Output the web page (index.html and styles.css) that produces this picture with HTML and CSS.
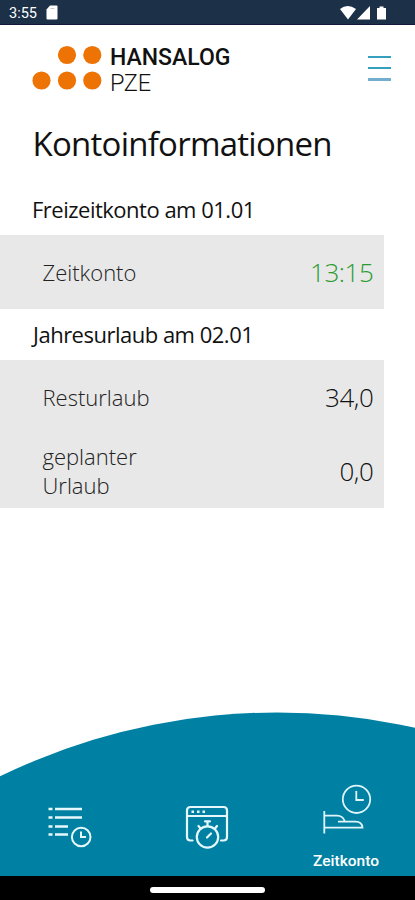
FILE: index.html
```html
<!DOCTYPE html>
<html lang="de">
<head>
<meta charset="utf-8">
<title>Kontoinformationen</title>
<link rel="stylesheet" href="styles.css">
</head>
<body>
<div class="statusbar">
  <span class="time">3:55</span>
  <svg class="sd" width="12" height="15" viewBox="0 0 12 15"><path d="M4 .5h6.500q1 0 1 1v12q0 1-1 1h-9q-1 0-1-1V4.500z" fill="#fff"/><path d="M4.500 3.500h4" stroke="#c3cad1"/></svg>
  <svg class="signals" width="50" height="16" viewBox="0 0 50 16" fill="#fff"><path d="M1 4Q8.500-2 17 4L9 14.500z"/><path d="M31 1v13.500H18z"/><path d="M40.500 1.500h4v1.500h2.500v11.500h-9V3h2.500z"/></svg>
</div>
<header class="header">
  <svg class="dots" width="70" height="46" viewBox="0 0 70 46" fill="#ee7305"><circle cx="35" cy="10" r="9.100"/><circle cx="60.300" cy="10" r="9.100"/><circle cx="9.500" cy="35.500" r="9.100"/><circle cx="35" cy="35.500" r="9.100"/><circle cx="60.300" cy="35.500" r="9.100"/></svg>
  <div class="brand"><div class="brand-name">HANSALOG</div><div class="brand-sub">PZE</div></div>
  <div class="menu"><i></i><i></i><i></i></div>
</header>
<main class="content">
  <h1>Kontoinformationen</h1>
  <h2 class="first">Freizeitkonto am 01.01</h2>
  <section class="card">
    <div class="row"><span class="label">Zeitkonto</span><span class="value green">13:15</span></div>
  </section>
  <h2 class="second">Jahresurlaub am 02.01</h2>
  <section class="card">
    <div class="row"><span class="label">Resturlaub</span><span class="value">34,0</span></div>
    <div class="row"><span class="label">geplanter<br>Urlaub</span><span class="value">0,0</span></div>
  </section>
</main>
<nav class="tabs">
  <svg class="curve" width="415" height="164" viewBox="0 712 415 164"><circle cx="277" cy="1345.500" r="633" fill="#0081a3"/></svg>
  <div class="tab">
    <svg width="70" height="70" viewBox="0 0 70 70" fill="none" stroke="#e6f8fc">
      <g stroke-width="2.600"><path d="M13.500 19h4M20 19h27M13.500 27.500h4M20 27.500h27M13.500 36.500h4M20 36.500h13M13.500 44.500h4M20 44.500h13"/></g>
      <g stroke-width="2"><circle cx="46.200" cy="47" r="9.300"/><path d="M46 41.500V47h5"/></g>
    </svg>
  </div>
  <div class="tab">
    <svg width="70" height="70" viewBox="0 0 70 70" fill="none" stroke="#e6f8fc" stroke-width="2.200" stroke-linecap="round">
      <path d="M18.500 50.500h-2q-3.500 0-3.500-3.500V20.500q0-3.500 3.500-3.500h33q3.500 0 3.500 3.500V47q0 3.500-3.500 3.500h-2.500M13 26h40"/>
      <path d="M17.500 21.700h2.500M23 21.700h2.500M28.500 21.700h2.500" stroke-width="2.500" stroke-linecap="butt"/>
      <circle cx="33.500" cy="47" r="10.700"/>
      <path d="M31 31.300h5M33.500 32v4M24.500 36l2 2.500M43 36l-2 2.500M33 47.500l4-4"/>
    </svg>
  </div>
  <div class="tab active">
    <svg width="90" height="75" viewBox="0 0 90 75" fill="none" stroke="#dff5fb" stroke-width="1.800">
      <circle cx="51.500" cy="24.300" r="13.700"/><path d="M51.300 16v9h7.500"/>
      <path d="M19.300 36v22.500M19.300 40.700H32q6 0 8 6M33 46.700H50.500q6.500 0 7 6H19.300"/>
    </svg>
    <span>Zeitkonto</span>
  </div>
</nav>
<footer class="homebar"><i></i></footer>
</body>
</html>
```
FILE: styles.css
```css
* { box-sizing: border-box; }
body { margin: 0; width: 415px; height: 900px; overflow: hidden; display: flex; flex-direction: column; background: #fff; color: #111; font-family: "Open Sans", "Noto Sans", sans-serif; }
.statusbar { height: 25px; flex: none; display: flex; align-items: flex-start; background: #1c3048; border-bottom: 1px solid #14173c; color: #fff; padding: 5px 32px 0 9px; }
.time { font: 400 14.500px/18px Roboto, sans-serif; width: 37px; }
.signals { margin-left: auto; margin-right: -6px; }
.header { height: 87px; flex: none; display: flex; align-items: flex-start; padding: 20px 24px 0 32px; }
.brand { font-family: Roboto, sans-serif; margin-left: 8px; padding-top: 1px; color: #111; }
.brand-name { font-size: 23px; font-weight: 500; line-height: 24px; }
.brand-sub { font-size: 23.500px; font-weight: 300; line-height: 26px; letter-spacing: -.3px; }
.menu { margin-left: auto; padding-top: 11px; display: flex; flex-direction: column; gap: 9px; }
.menu i { width: 23px; height: 2px; background: #35a0bd; }
.menu i:last-child { height: 3px; background: #74aecf; }
.content { flex: 1; }
h1 { margin: 9px 0 0 32.500px; font-weight: 400; font-size: 33px; line-height: 46px; letter-spacing: -.75px; }
h2 { margin: 0 0 0 32px; font-weight: 400; font-size: 22px; white-space: nowrap; letter-spacing: -.5px; }
.first { height: 68px; line-height: 85px; }
.second { height: 51px; line-height: 51px; padding-left: 1px; }
.card { width: 384px; background: #e8e8e8; }
.row { height: 74px; display: flex; align-items: center; justify-content: space-between; padding: 0 10.500px 0 42.500px; }
.label { font-size: 22px; line-height: 29px; font-weight: 300; color: #222; }
.value { font-size: 26px; line-height: 36px; font-weight: 300; color: #111; letter-spacing: -.4px; }
.green { color: #2b9c30; }
.tabs { height: 164px; flex: none; position: relative; display: grid; grid-template-columns: 139px 137px 139px; }
.curve { position: absolute; left: 0; top: 0; }
.tab { position: relative; padding-top: 78px; display: flex; flex-direction: column; align-items: center; }
.tab:nth-of-type(2) { padding-left: 3px; }
.active { padding-top: 63px; }
.active svg { margin-left: 8px; }
.active span { font: 500 15.500px/22px Roboto, sans-serif; color: #fff; margin-left: 1px; }
.homebar { height: 24px; flex: none; background: #000; display: flex; justify-content: center; padding-top: 11px; }
.homebar i { width: 115px; height: 6px; border-radius: 3px; background: #fff; }
```
